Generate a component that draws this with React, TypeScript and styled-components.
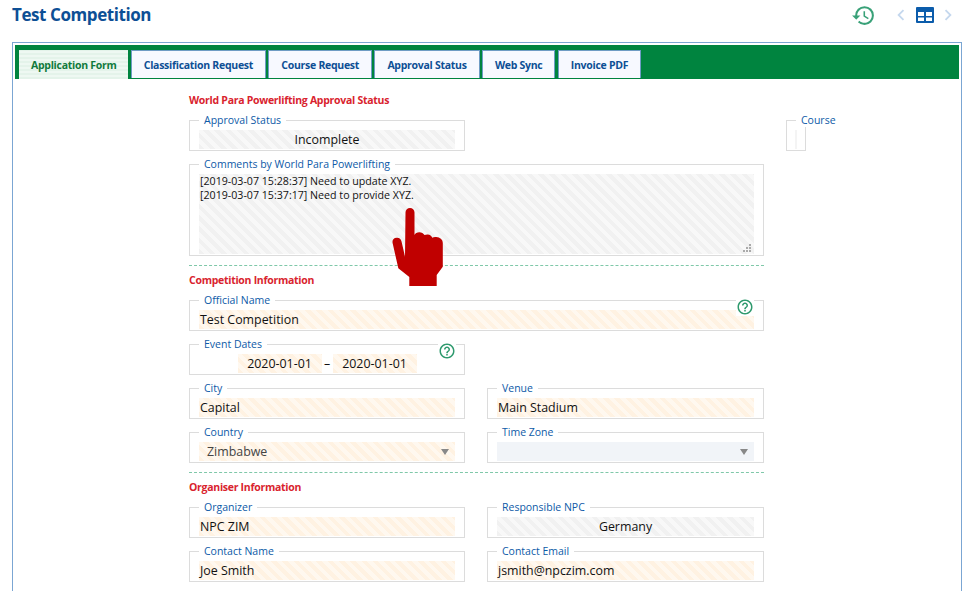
import { FC, ReactNode } from "react"
import styled, { createGlobalStyle, css } from "styled-components"
import { MdHistory, MdHelpOutline, MdChevronLeft, MdChevronRight } from "react-icons/md"

const FONT = `"Open Sans", "Noto Sans", "Liberation Sans", sans-serif`

const GlobalStyle = createGlobalStyle`
  html, body {
    margin: 0;
    height: 100%;
    overflow: hidden;
    background: #fff;
    font-family: ${FONT};
  }
`

type Fill = "gray" | "orange" | "plain"

const fills = {
  gray: css`
    background: repeating-linear-gradient(45deg, #f1f1f1 0 4px, #f8f8f8 4px 8px);
  `,
  orange: css`
    background: repeating-linear-gradient(45deg, #fff2e2 0 4px, #fff8ef 4px 8px);
  `,
  plain: css`
    background: #f1f4f8;
  `,
}

const tabs = [
  "Application Form",
  "Classification Request",
  "Course Request",
  "Approval Status",
  "Web Sync",
  "Invoice PDF",
]

interface FieldProps {
  label: string
  value?: string
  fill?: Fill
  center?: boolean
  select?: boolean
  help?: boolean
}

const Field: FC<FieldProps> = ({ label, value, fill = "orange", center, select, help }) => (
  <Box>
    <Legend>{label}</Legend>
    <Value $fill={fill} $center={center} $select={select}>
      {value}
      {select && <Arrow />}
    </Value>
    {help && <HelpIcon />}
  </Box>
)

const Section: FC<{ title: string; children: ReactNode }> = ({ title, children }) => (
  <>
    <Heading>{title}</Heading>
    {children}
  </>
)

export default function App() {
  return (
    <>
      <GlobalStyle />
      <Header>
        <Title>Test Competition</Title>
        <Tools>
          <HistoryIcon />
          <Pager>
            <MdChevronLeft size={22} />
            <svg width="18" height="16" viewBox="0 0 18 16">
              <rect width="18" height="16" rx="1" fill="#0b5cab" />
              <rect x="2" y="5" width="6" height="4" fill="#fff" />
              <rect x="10" y="5" width="6" height="4" fill="#fff" />
              <rect x="2" y="10.5" width="6" height="3.5" fill="#fff" />
              <rect x="10" y="10.5" width="6" height="3.5" fill="#fff" />
            </svg>
            <MdChevronRight size={22} />
          </Pager>
        </Tools>
      </Header>

      <Panel>
        <TabBar>
          {tabs.map((name, i) => (
            <Tab key={name} $active={i === 0}>
              {name}
            </Tab>
          ))}
        </TabBar>

        <Content>
          <Form>
            <Section title="World Para Powerlifting Approval Status">
              <Stack>
                <TwoCols>
                  <Field label="Approval Status" value="Incomplete" fill="gray" center />
                </TwoCols>
                <Box>
                  <Legend>Comments by World Para Powerlifting</Legend>
                  <Comments>
                    [2019-03-07 15:28:37] Need to update XYZ.
                    <br />
                    [2019-03-07 15:37:17] Need to provide XYZ.
                    <Grip viewBox="0 0 8 8">
                      <rect x="6" y="0" width="2" height="2" />
                      <rect x="3" y="3" width="2" height="2" />
                      <rect x="6" y="3" width="2" height="2" />
                      <rect x="0" y="6" width="2" height="2" />
                      <rect x="3" y="6" width="2" height="2" />
                      <rect x="6" y="6" width="2" height="2" />
                    </Grip>
                  </Comments>
                </Box>
              </Stack>
            </Section>

            <Divider />

            <Section title="Competition Information">
              <Stack>
                <Field label="Official Name" value="Test Competition" help />
                <TwoCols>
                  <Box>
                    <Legend>Event Dates</Legend>
                    <Dates>
                      <DateInput>2020-01-01</DateInput>
                      <Dash>–</Dash>
                      <DateInput>2020-01-01</DateInput>
                    </Dates>
                    <HelpIcon $right={8} />
                  </Box>
                </TwoCols>
                <TwoCols>
                  <Field label="City" value="Capital" />
                  <Field label="Venue" value="Main Stadium" />
                </TwoCols>
                <TwoCols>
                  <Field label="Country" value="Zimbabwe" select />
                  <Field label="Time Zone" fill="plain" select />
                </TwoCols>
              </Stack>
            </Section>

            <Divider />

            <Section title="Organiser Information">
              <Stack>
                <TwoCols>
                  <Field label="Organizer" value="NPC ZIM" />
                  <Field label="Responsible NPC" value="Germany" fill="gray" center />
                </TwoCols>
                <TwoCols>
                  <Field label="Contact Name" value="Joe Smith" />
                  <Field label="Contact Email" value="jsmith@npczim.com" />
                </TwoCols>
              </Stack>
            </Section>
          </Form>

          <Side>
            <NarrowBox>
              <NarrowLegend>Course</NarrowLegend>
              <Sliver />
            </NarrowBox>
          </Side>
        </Content>

        <Hand viewBox="0 0 53 78">
          <path d="M13.5 4.5a4.500 4.500 0 0 1 9 0V27c.8-1.800 2.500-2.800 4.800-2.800 2.300 0 4.200 1 5.200 2.900 1-.6 2.200-.8 3.300-.7 2.200.2 3.700 1.400 4.500 3.300 1-.6 2.300-.8 4-.6 3.700.4 6.500 2.500 6.500 5.900V58.700L44.700 67V78H17.300V69L6.300 60.300 .6 35c-.6-3 1-5 4-5.200 2.700-.2 4.400 1.400 5 4L13 48.700Z" />
        </Hand>
      </Panel>
    </>
  )
}

const Header = styled.div`
  display: flex;
  align-items: flex-start;
  justify-content: space-between;
  height: 42px;
  padding: 0 14px 0 12px;
  box-sizing: border-box;
`

const Title = styled.h1`
  margin: 2px 0 0;
  font-size: 17px;
  letter-spacing: -0.420px;
  line-height: 26px;
  font-weight: 700;
  color: #0d4f95;
`

const Tools = styled.div`
  display: flex;
  align-items: center;
  gap: 14px;
  height: 30px;
`

const HistoryIcon = styled(MdHistory).attrs({ size: 25 })`
  color: #39a178;
`

const Pager = styled.div`
  display: flex;
  align-items: center;
  gap: 3.500px;
  color: #c5d8ee;
`

const Panel = styled.div`
  position: relative;
  margin-left: 12px;
  width: 950px;
  box-sizing: border-box;
  border: 1px solid #7ba6d3;
  padding: 2px;
  height: 700px;
`

const TabBar = styled.div`
  display: flex;
  align-items: flex-start;
  gap: 2.300px;
  height: 34px;
  box-sizing: border-box;
  padding: 5px 0 0 4px;
  background: #00843f;
`

const Tab = styled.div<{ $active?: boolean }>`
  box-sizing: border-box;
  height: 28px;
  padding: 0 12px;
  display: flex;
  align-items: center;
  font-size: 10.500px;
  letter-spacing: -0.280px;
  font-weight: 700;
  white-space: nowrap;
  color: #0d4f95;
  background: #f7f9ff;
  border: solid #6f9cc4;
  border-width: 1px 1px 0;
  ${({ $active }) =>
    $active &&
    css`
      height: 29px;
      color: #107a3c;
      border: 0;
      padding: 0 12px;
      background: repeating-linear-gradient(0deg, #e4f3ea 0 2px, #eef8f2 2px 4px);
    `}
`

const Content = styled.div`
  display: flex;
  align-items: flex-start;
  gap: 22px;
  padding: 14px 0 0 174px;
`

const Form = styled.div`
  width: 575px;
`

const Side = styled.div`
  width: 20px;
  padding-top: 20px;
`

const Heading = styled.h3`
  margin: 0 0 6px;
  font-size: 10.500px;
  letter-spacing: -0.280px;
  line-height: 14px;
  font-weight: 700;
  color: #d9232e;
`

const Stack = styled.div`
  display: flex;
  flex-direction: column;
  gap: 6px;
`

const TwoCols = styled.div`
  display: grid;
  grid-template-columns: 276px 277px;
  gap: 22px;
`

const Box = styled.fieldset`
  position: relative;
  min-width: 0;
  margin: 0;
  padding: 0 9px 1px;
  border: 1px solid #dcdcdc;
`

const Legend = styled.legend`
  padding: 0 5px;
  font-size: 10.500px;
  line-height: 14px;
  color: #0d5aa7;
  white-space: nowrap;
`

const Value = styled.div<{ $fill: Fill; $center?: boolean; $select?: boolean }>`
  position: relative;
  box-sizing: border-box;
  height: 19px;
  margin-top: 3px;
  padding: 0 1px;
  font-size: 12.400px;
  line-height: 19px;
  color: #111;
  ${({ $fill }) => fills[$fill]}
  ${({ $center }) => $center && "text-align: center;"}
  ${({ $select }) => $select && "padding-left: 8px; color: #444;"}
`

const Arrow = styled.span`
  position: absolute;
  right: 6px;
  top: 7px;
  border: 4px solid transparent;
  border-top: 6px solid #888;
  border-bottom: 0;
`

const HelpIcon = styled(MdHelpOutline).attrs({ size: 18 })<{ $right?: number }>`
  position: absolute;
  top: -9px;
  right: ${({ $right }) => $right ?? 9}px;
  color: #2f9a6e;
  background: #fff;
`

const Comments = styled.div`
  position: relative;
  height: 80px;
  margin-top: 3px;
  padding: 0 1px;
  box-sizing: border-box;
  font-size: 10.650px;
  line-height: 14px;
  color: #111;
  ${fills.gray}
`

const Grip = styled.svg`
  position: absolute;
  right: 3px;
  bottom: 2px;
  width: 8px;
  height: 8px;
  fill: #aaa;
`

const Dates = styled.div`
  display: flex;
  justify-content: center;
  height: 19px;
  margin-top: 3px;
  font-size: 12.400px;
  line-height: 19px;
  color: #111;
`

const DateInput = styled.div`
  width: 84px;
  text-align: center;
  ${fills.orange}
`

const Dash = styled.span`
  width: 11px;
  text-align: center;
`

const Divider = styled.div`
  margin: 9px 0 7px;
  border-top: 1px dashed #7fc8a9;
`

const NarrowBox = styled.fieldset`
  width: 20px;
  box-sizing: border-box;
  margin: 0;
  padding: 0 8px 1px;
  border: 1px solid #dcdcdc;
  min-width: 0;
`

const NarrowLegend = styled(Legend)`
  margin-left: 1px;
`

const Sliver = styled.div`
  height: 19px;
  margin-top: 3px;
  width: 2px;
  background: #f4f4f4;
`

const Hand = styled.svg`
  position: absolute;
  left: 379px;
  top: 165px;
  width: 53px;
  height: 78px;
  fill: #c00000;
`
